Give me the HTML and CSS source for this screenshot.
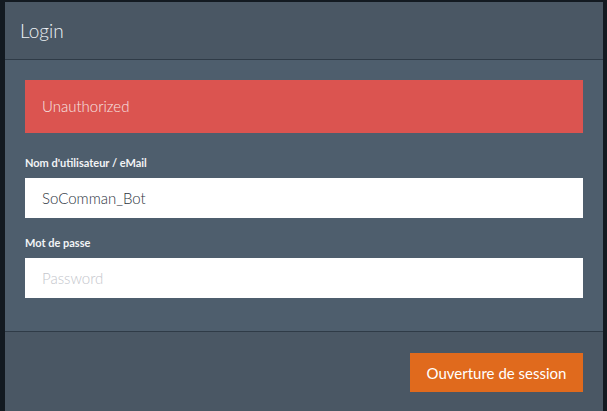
FILE: index.html
```html
<!DOCTYPE html>
<html>
<head>
<meta charset="utf-8">
<link rel="stylesheet" href="styles.css">
</head>
<body>
<div class="panel">
  <div class="panel-header">Login</div>
  <div class="panel-body">
    <div class="alert">Unauthorized</div>
    <div class="group group-first">
      <label class="label">Nom d'utilisateur / eMail</label>
      <div class="input">SoComman_Bot</div>
    </div>
    <div class="group">
      <label class="label">Mot de passe</label>
      <div class="input placeholder">Password</div>
    </div>
  </div>
  <div class="panel-footer">
    <button class="btn">Ouverture de session</button>
  </div>
</div>
</body>
</html>
```
FILE: styles.css
```css
html, body {
  margin: 0;
  padding: 0;
  background: #131a21;
  height: 100%;
  overflow: hidden;
  font-family: Lato, "Open Sans", sans-serif;
}
.panel {
  margin: 2px 0 0 5px;
  width: 598px;
  background: #4e5e6d;
}
.panel-header {
  height: 57px;
  background: #4a5764;
  border-bottom: 1px solid #2f3b47;
  color: #eef2f5;
  font-size: 19px;
  font-weight: 300;
  line-height: 57px;
  padding-left: 15px;
}
.panel-body {
  padding: 20px 20px 33px 20px;
}
.alert {
  height: 53px;
  background: #db5450;
  color: #f7e4e2;
  font-size: 15px;
  line-height: 53px;
  padding-left: 17px;
  font-weight: 300;
}
.group {
  margin-top: 15px;
}
.group-first {
  margin-top: 20px;
}
.label {
  display: block;
  color: #f2f4f6;
  font-size: 11px;
  font-weight: 700;
  line-height: 20px;
  margin-bottom: 5px;
}
.input {
  height: 40px;
  background: #fff;
  color: #2c3440;
  font-size: 15px;
  line-height: 40px;
  padding-left: 17px;
  font-weight: 300;
}
.placeholder {
  color: #c4c6cc;
}
.panel-footer {
  border-top: 1px solid #2f3b47;
  background: #4a5764;
  padding: 21px 20px 19px;
  display: flex;
  justify-content: flex-end;
}
.btn {
  height: 39px;
  width: 173px;
  border: none;
  background: #e06a1d;
  color: #ffffff;
  font-family: Lato, sans-serif;
  font-size: 15px;
  padding: 0;
}
```
